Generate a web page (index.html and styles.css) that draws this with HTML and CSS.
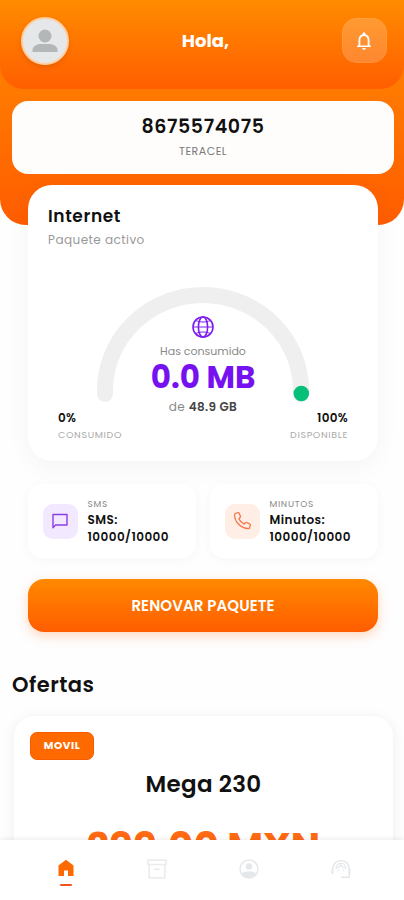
FILE: index.html
```html
<!DOCTYPE html>
<html lang="es">

<head>
  <meta charset="UTF-8">
  <meta name="viewport" content="width=device-width, initial-scale=1.0">
  <title>Teracel</title>
  <link rel="stylesheet" href="styles.css">
</head>

<body>
  <div class="hero">
    <header class="header">
      <div class="avatar">
        <svg width="26" height="24" viewBox="0 0 26 24" fill="#b3b7b8">
          <circle cx="13" cy="7" r="6.5" />
          <path d="M.5 23v-2c0-4 5-6 8-6h9c3 0 8 2 8 6v2z" />
        </svg>
      </div>
      <h1 class="greeting">Hola,</h1>
      <button class="bell" aria-label="Notificaciones">
        <svg width="22" height="22" viewBox="0 0 24 24" fill="#fff">
          <path d="M12 21.5c1.1 0 2-.9 2-2h-4c0 1.1.9 2 2 2zm6-5.5v-5c0-3.07-1.63-5.64-4.5-6.32V4c0-.83-.67-1.5-1.5-1.5s-1.5.67-1.5 1.5v.68C7.64 5.36 6 7.92 6 11v5l-1.500 1.500v1h15v-1L18 16zm-2 .8H8V11c0-2.480 1.510-4.500 4-4.500s4 2.020 4 4.500v5.800z" />
        </svg>
      </button>
    </header>
    <div class="line-card">
      <div class="line-number">8675574075</div>
      <div class="line-brand">TERACEL</div>
    </div>
  </div>

  <main class="content">
    <section class="usage-card">
      <h2 class="usage-title">Internet</h2>
      <p class="usage-subtitle">Paquete activo</p>
      <div class="gauge">
        <svg class="gauge-arc" width="230" height="124" viewBox="0 0 230 124">
          <path d="M17 110v-3.500a98 95.500 0 0 1 196 0v3.500" fill="none" stroke="#efefef" stroke-width="16" stroke-linecap="round" />
          <circle cx="213.300" cy="109.500" r="7.800" fill="#06bf78" />
        </svg>
        <div class="gauge-info">
          <svg width="24" height="24" viewBox="0 0 24 24" fill="none" stroke="#7c1cf0" stroke-width="1.600">
            <circle cx="12" cy="12" r="10" />
            <ellipse cx="12" cy="12" rx="4.600" ry="10" />
            <path d="M2 12h20M4.800 5.500c4 2 10.400 2 14.400 0M4.800 18.500c4-2 10.400-2 14.400 0" stroke-width="1" />
          </svg>
          <span class="gauge-label">Has consumido</span>
          <span class="gauge-value">0.0 MB</span>
          <span class="gauge-total">de <b>48.9 GB</b></span>
        </div>
      </div>
      <div class="limits">
        <div>
          <div class="limit-value">0%</div>
          <div class="limit-label">CONSUMIDO</div>
        </div>
        <div class="limit-right">
          <div class="limit-value">100%</div>
          <div class="limit-label">DISPONIBLE</div>
        </div>
      </div>
    </section>

    <section class="extras">
      <div class="extra-card">
        <div class="extra-icon sms">
          <svg width="20" height="20" viewBox="0 0 20 20" fill="none" stroke="#8a3ee8" stroke-width="1.400" stroke-linejoin="round">
            <path d="M3 3.500h14v10.500H5.500L3 16.800z" />
          </svg>
        </div>
        <div>
          <div class="extra-label">SMS</div>
          <div class="extra-value">SMS:<br>10000/10000</div>
        </div>
      </div>
      <div class="extra-card">
        <div class="extra-icon minutes">
          <svg width="20" height="20" viewBox="0 0 20 20" fill="none" stroke="#f8764a" stroke-width="1.300" stroke-linejoin="round">
            <path d="M3.400 2.500 5.800 1.600c.6-.2 1 .1 1.300.6l1.300 3c.2.500.1.900-.3 1.300L6.900 7.700c1 2.300 2.800 4.200 5.200 5.400l1.300-1.300c.4-.4.8-.5 1.300-.3l2.900 1.300c.5.200.8.700.7 1.200l-.7 2.700c-.2.600-.6.900-1.200.9C8.800 17.400 2.700 11 2.600 3.700c0-.600.3-1 .8-1.200z" />
          </svg>
        </div>
        <div>
          <div class="extra-label">MINUTOS</div>
          <div class="extra-value">Minutos:<br>10000/10000</div>
        </div>
      </div>
    </section>

    <button class="renew">RENOVAR PAQUETE</button>
  </main>

  <section class="offers">
    <h2 class="offers-title">Ofertas</h2>
    <article class="offer-card">
      <span class="offer-tag">MOVIL</span>
      <h3 class="offer-name">Mega 230</h3>
      <div class="offer-price">299.00 MXN</div>
    </article>
  </section>

  <nav class="tabbar">
    <a class="tab active">
      <svg width="20" height="20" viewBox="0 0 20 20" fill="#ff6a00">
        <path d="M10 .8 2.500 6.500V17H8v-5.500h4V17h5.500V6.500z" />
      </svg>
    </a>
    <a class="tab">
      <svg width="20" height="20" viewBox="0 0 20 20" fill="none" stroke="#eaecee" stroke-width="1.700" stroke-linejoin="round">
        <path d="M1 1.200h18v4.300H1zM2.200 5.500h15.600v13.300H2.200zM7.300 10.300h5.400" />
      </svg>
    </a>
    <a class="tab">
      <svg width="20" height="20" viewBox="0 0 20 20" fill="#e5e8ea">
        <circle cx="10" cy="10" r="9" fill="none" stroke="#e5e8ea" stroke-width="1.500" />
        <circle cx="10" cy="7.500" r="3.200" />
        <path d="M2.500 14.500c4-3 11-3 15 0-1.500 2.500-4.400 4.500-7.500 4.500s-6-2-7.500-4.500z" />
      </svg>
    </a>
    <a class="tab">
      <svg width="20" height="20" viewBox="0 0 20 20" fill="none" stroke="#e5e8ea" stroke-width="1.500" stroke-linecap="round">
        <path d="M1.800 14V9.500a8.200 8 0 0 1 16.400 0v8.700H10.500M1.200 10.500v4M18.800 10.500v4" />
        <path d="M5 9.500c2.700-.5 4-2 4.700-3.700 1 2 2.800 3 5.300 3.200A5 5 0 0 0 5 9.500z" stroke-width="1.100" />
        <path d="M7.300 11.500h.2M12.500 11.500h.2" />
      </svg>
    </a>
  </nav>
</body>

</html>
```
FILE: styles.css
```css
* {
  box-sizing: border-box;
}

body {
  margin: 0;
  height: 900px;
  overflow: hidden;
  background-color: #fefefe;
  color: #111;
  font-family: Poppins, Inter, sans-serif;
}

h1, h2, h3, p {
  margin: 0;
}

button {
  border: 0;
  padding: 0;
  font-family: inherit;
}

svg {
  display: block;
}

.hero {
  height: 225px;
  border-radius: 0 0 26px 26px;
  background: linear-gradient(#ff8c00, #ff7800 42%, #ff5c00);
}

.header {
  display: flex;
  align-items: center;
  justify-content: space-between;
  height: 89px;
  padding: 0 17px 8px 21px;
  border-radius: 0 0 24px 24px;
  background: linear-gradient(#ff8c00, #ff5e00);
}

.avatar {
  display: flex;
  align-items: center;
  justify-content: center;
  width: 48px;
  height: 48px;
  border: 2px solid #ffcfa3;
  border-radius: 50%;
  background-color: #e5e7e8;
  box-shadow: 0 2px 5px rgba(120, 50, 0, 0.2);
}

.greeting {
  color: #fff;
  font-size: 18px;
  font-weight: 700;
  line-height: 24px;
}

.bell {
  display: flex;
  align-items: center;
  justify-content: center;
  width: 45px;
  height: 45px;
  border: 1px solid rgba(255, 255, 255, 0.08);
  border-radius: 15px;
  background-color: rgba(255, 255, 255, 0.19);
}

.line-card {
  height: 73px;
  margin: 12px 10px 0 12px;
  padding-top: 14px;
  border-radius: 16px;
  background-color: #fffdfc;
  text-align: center;
}

.line-number {
  font-size: 19px;
  font-weight: 600;
  line-height: 24px;
  letter-spacing: 0.6px;
}

.line-brand {
  margin-top: 4px;
  color: #777;
  font-size: 11px;
  line-height: 16px;
  letter-spacing: 0.5px;
}

.content {
  margin-top: -40px;
  padding: 0 26px 0 28px;
}

.usage-card {
  height: 276px;
  padding: 20px;
  border-radius: 24px;
  background-color: #fff;
  box-shadow: 0 6px 24px rgba(0, 0, 0, 0.045);
}

.usage-title {
  font-size: 17px;
  font-weight: 600;
  line-height: 22px;
  letter-spacing: 0.6px;
}

.usage-subtitle {
  margin-top: 4px;
  color: #999;
  font-size: 12px;
  line-height: 18px;
  letter-spacing: 0.45px;
}

.gauge {
  display: grid;
  justify-items: center;
  height: 142px;
  margin-top: 35px;
}

.gauge-arc,
.gauge-info {
  grid-area: 1 / 1;
}

.gauge-info {
  display: flex;
  flex-direction: column;
  align-items: center;
  padding-top: 31px;
}

.gauge-label {
  margin-top: 3px;
  color: #888;
  font-size: 11px;
  line-height: 18px;
}

.gauge-value {
  color: #7612f0;
  font-size: 31px;
  font-weight: 700;
  line-height: 34px;
}

.gauge-total {
  color: #888;
  font-size: 12px;
  line-height: 25px;
  letter-spacing: 0.35px;
}

.gauge-total b {
  color: #444;
  font-weight: 600;
}

.limits {
  display: flex;
  justify-content: space-between;
  margin-top: -17px;
  padding: 0 10px;
}

.limit-right {
  text-align: right;
}

.limit-value {
  font-size: 12px;
  font-weight: 600;
  line-height: 17px;
  letter-spacing: 0.3px;
}

.limit-label {
  color: #aaa;
  font-size: 9.5px;
  line-height: 17px;
  letter-spacing: 0.65px;
}

.extras {
  display: grid;
  grid-template-columns: 1fr 1fr;
  gap: 14px;
  margin-top: 23px;
}

.extra-card {
  display: flex;
  align-items: center;
  gap: 10px;
  height: 74px;
  padding-left: 14.5px;
  border-radius: 14px;
  background-color: #fff;
  box-shadow: 0 2px 12px rgba(0, 0, 0, 0.035);
}

.extra-icon {
  display: flex;
  align-items: center;
  justify-content: center;
  width: 35px;
  height: 35px;
  border-radius: 10px;
}

.sms {
  background-color: #f2e8ff;
}

.minutes {
  background-color: #ffeee5;
}

.extra-label {
  color: #888;
  font-size: 9px;
  line-height: 14px;
  letter-spacing: 0.7px;
}

.extra-value {
  font-size: 12px;
  font-weight: 600;
  line-height: 17px;
  letter-spacing: 0.45px;
}

.renew {
  display: block;
  width: 100%;
  height: 53px;
  margin-top: 21px;
  border-radius: 16px;
  background: linear-gradient(#ff8900, #ff5d00);
  box-shadow: 0 4px 12px rgba(255, 100, 0, 0.25);
  color: #fff;
  font-size: 15px;
  font-weight: 600;
  letter-spacing: 0.1px;
}

.offers {
  margin-top: 38px;
  padding: 0 11px 0 12px;
}

.offers-title {
  font-size: 21px;
  font-weight: 600;
  line-height: 30px;
  letter-spacing: 0.5px;
}

.offer-card {
  height: 184px;
  margin: 16px 0 0 2px;
  padding: 16px;
  border-radius: 20px 20px 0 0;
  background-color: #fff;
  box-shadow: 0 2px 14px rgba(0, 0, 0, 0.07);
  text-align: center;
}

.offer-tag {
  display: block;
  width: 64px;
  height: 28px;
  border: 1px solid #f75c00;
  border-radius: 7px;
  background-color: #ff6a00;
  color: #fff;
  font-size: 10.5px;
  font-weight: 700;
  line-height: 26px;
  letter-spacing: 0.6px;
}

.offer-name {
  margin-top: 8px;
  font-size: 23px;
  font-weight: 600;
  line-height: 32px;
  letter-spacing: 0.3px;
}

.offer-price {
  margin-top: 23px;
  color: #ff6a13;
  font-size: 39px;
  font-weight: 700;
  line-height: 48px;
}

.tabbar {
  position: fixed;
  right: 0;
  bottom: 0;
  left: 0;
  display: grid;
  grid-template-columns: repeat(4, 92px);
  height: 60px;
  padding-left: 19px;
  background-color: #fff;
  box-shadow: 0 -1px 5px rgba(0, 0, 0, 0.08);
}

.tab {
  display: flex;
  flex-direction: column;
  align-items: center;
  padding-top: 19px;
}

.active {
  padding-left: 1px;
}

.active::after {
  content: "";
  width: 12px;
  height: 2px;
  margin-top: 5px;
  border-radius: 1px;
  background-color: #f45320;
}
```
